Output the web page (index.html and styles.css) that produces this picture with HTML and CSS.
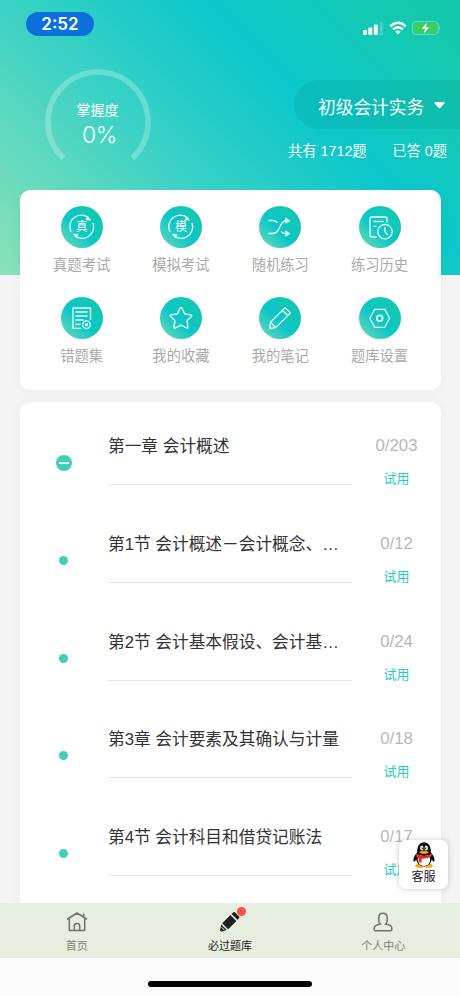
FILE: index.html
```html
<!DOCTYPE html>
<html lang="zh-CN">
<head>
<meta charset="utf-8">
<meta name="viewport" content="width=device-width, initial-scale=1">
<title>必过题库</title>
<link rel="stylesheet" href="styles.css">
</head>
<body>
<div class="screen">
  <header class="hero">
    <div class="status">
      <span class="clock">2:52</span>
      <div class="signals">
        <svg width="21" height="14" viewBox="0 0 21 14"><g fill="#fff"><rect x="0" y="9" width="4" height="5" rx="1"/><rect x="5.3" y="6.5" width="4" height="7.5" rx="1"/><rect x="10.8" y="3.5" width="4" height="10.5" rx="1"/><rect x="16.5" y="1" width="3.6" height="13" rx="1" opacity=".2"/></g></svg>
        <svg width="18" height="14" viewBox="0 0 18 14" fill="none" stroke="#fff" stroke-width="2.4"><path d="M1.2 5.4Q9-1.9 16.8 5.4M4 8.4Q9 3.9 14 8.4"/><path d="M9 13.4L6.2 10.5Q9 8.4 11.8 10.5Z" fill="#fff" stroke="none"/></svg>
        <svg width="30" height="14" viewBox="0 0 30 14"><rect x=".5" y=".5" width="25.6" height="13" rx="3.5" fill="none" stroke="#6bdccb"/><rect x="2" y="2" width="22.6" height="10" rx="2" fill="#3bcf5b"/><path d="M27.3 4.8q1.6 2.2 0 4.4z" fill="#8be4d6"/><path d="M14.8 1.8L9.6 7.7h3.3l-1 4.7 5.2-6.1h-3.3z" fill="#fff"/></svg>
      </div>
    </div>
    <div class="summary">
      <div class="gauge">
        <svg class="gauge-arc" width="108" height="108" viewBox="0 0 108 108"><path d="M19.6 90.3A50 50 0 1 1 88.4 90.3" fill="none" stroke="#fff" stroke-opacity=".25" stroke-width="5.6"/></svg>
        <span class="gauge-label">掌握度</span>
        <span class="gauge-value">0%</span>
      </div>
      <div class="course">
        <div class="course-picker"><span>初级会计实务</span><svg width="11" height="7" viewBox="0 0 11 7"><path d="M1 0h9q1.2.2.4 1.2L6.3 6q-.8.7-1.6 0L.6 1.2Q-.1.2 1 0z" fill="#fff"/></svg></div>
        <div class="totals"><span>共有 1712题</span><span>已答 0题</span></div>
      </div>
    </div>
  </header>

  <main class="content">
    <section class="card tools">
      <div class="tool"><span class="disc"><svg viewBox="0 0 42 42"><path d="M10 26A11.6 11.6 0 0 1 28 12M32 17A11.6 11.6 0 0 1 14 30"/><path class="solid" d="M26.4 10.3l3.3 4-4.7-.5zM15.6 32l-3.4-4 4.8.5z"/></svg><b>真</b></span><span>真题考试</span></div>
      <div class="tool"><span class="disc"><svg viewBox="0 0 42 42"><path d="M10 26A11.6 11.6 0 0 1 28 12M32 17A11.6 11.6 0 0 1 14 30"/><path class="solid" d="M26.4 10.3l3.3 4-4.7-.5zM15.6 32l-3.4-4 4.8.5z"/></svg><b>模</b></span><span>模拟考试</span></div>
      <div class="tool"><span class="disc"><svg viewBox="0 0 42 42"><path d="M9.5 14.500h4q3.500 0 5 2.300M9.500 27.500h4c9 0 5.500-13 15-13M22 25.300q1.500 2.300 5 2.300h2"/><path class="solid" d="M26.500 11.800l4.500 2.900-4.500 2.800zM26.500 24.700l4.500 2.900-4.500 2.800z"/></svg></span><span>随机练习</span></div>
      <div class="tool"><span class="disc"><svg viewBox="0 0 42 42"><path d="M17.500 31h-5q-1.500 0-1.500-1.500v-17q0-1.500 1.500-1.500h14q1.500 0 1.500 1.500v4M14.500 15.500h10M14.500 20.300h3M26 21v5l3 3"/><circle cx="26" cy="25.700" r="7.200"/></svg></span><span>练习历史</span></div>
      <div class="tool"><span class="disc"><svg viewBox="0 0 42 42"><path d="M20 31.300h-8v-20.300h17.500v12M14.500 15h12M14.500 19h12M14.500 23h8M14.500 27.300h5"/><circle cx="25.500" cy="27.700" r="3.800"/><path d="M24.200 26.400l2.600 2.600M26.800 26.400l-2.600 2.600"/></svg></span><span>错题集</span></div>
      <div class="tool"><span class="disc"><svg viewBox="0 0 42 42"><path d="M21 10.500q.7 0 1 .8l2.700 5.600 6.200.9q1.600.4.500 1.600L27 23.700l1 6.400q0 1.600-1.400.9L21 28.200l-5.600 2.800q-1.400.7-1.400-.9l1-6.400-4.400-4.300q-1.100-1.200.5-1.600l6.200-.9 2.700-5.600q.3-.8 1-.8z"/></svg></span><span>我的收藏</span></div>
      <div class="tool"><span class="disc"><svg viewBox="0 0 42 42"><path d="M10.500 31.500l1-6.200L26 10.700l5.400 5.200L16.600 30.600zM11.500 25.300l5.100 5.300M23.400 13.300l5.400 5.300"/></svg></span><span>我的笔记</span></div>
      <div class="tool"><span class="disc"><svg viewBox="0 0 42 42"><path d="M15.700 12.300h10l5 9-5 9h-10l-5-9z"/><circle cx="20.700" cy="21.300" r="2.900" stroke-width="1.700"/></svg></span><span>题库设置</span></div>
    </section>

    <section class="card chapters">
      <article class="row"><span class="marker parent"></span><h2>第一章 会计概述</h2><div class="meta"><span>0/203</span><a>试用</a></div></article>
      <article class="row"><span class="marker"></span><h2>第1节 会计概述－会计概念、…</h2><div class="meta"><span>0/12</span><a>试用</a></div></article>
      <article class="row"><span class="marker"></span><h2>第2节 会计基本假设、会计基…</h2><div class="meta"><span>0/24</span><a>试用</a></div></article>
      <article class="row"><span class="marker"></span><h2>第3章 会计要素及其确认与计量</h2><div class="meta"><span>0/18</span><a>试用</a></div></article>
      <article class="row"><span class="marker"></span><h2>第4节 会计科目和借贷记账法</h2><div class="meta"><span>0/17</span><a>试用</a></div></article>
    </section>
  </main>

  <nav class="tabs">
    <div class="tab"><svg width="22" height="22" viewBox="0 0 22 22" fill="none" stroke="#6d756b" stroke-width="1.500" stroke-linejoin="round" stroke-linecap="round"><path d="M1.500 8L11 2l9.500 6M3.300 7.500v12h15.400v-12M17.700 5.500V3M8.300 19.300v-4.300q0-2.500 2.700-2.500t2.700 2.500v4.300"/></svg><span>首页</span></div>
    <div class="tab active"><svg width="22" height="22" viewBox="0 0 22 22" fill="#1d211b"><path d="M3.200 12.200L11.400 4l6 6-8.200 8.200zM12.600 2.900L14.300 1.300q.8-.8 1.600 0l4.200 4.200q.8.800 0 1.600L18.500 8.800zM2.300 13.500l5.400 5.400-4.600 1.500q-2 .5-2-1.400z"/><path d="M2.600 16.200l2.800 2.900" stroke="#e7eedf" stroke-width="1"/></svg><span>必过题库</span><i class="dot"></i></div>
    <div class="tab"><svg width="22" height="22" viewBox="0 0 22 22" fill="none" stroke="#6d756b" stroke-width="1.500"><path d="M8.200 13C6.300 11.500 6.800 9 6.800 6.500q0-4.300 4.200-4.300t4.200 4.300c0 2.500.5 5-1.400 6.500 2.500.5 6 .7 6 4v1.500q0 1.200-1.200 1.200H3.400q-1.200 0-1.200-1.200V17c0-3.300 3.500-3.500 6-4z"/></svg><span>个人中心</span></div>
  </nav>
  <div class="home-area"><span class="home-bar"></span></div>

  <aside class="support">
    <svg width="22" height="26" viewBox="0 0 24 26" preserveAspectRatio="none">
      <path d="M5 10C1 14 0 17 .7 19.500c.7 1 2-.5 2.800-2h17c.8 1.500 2.100 3 2.800 2C24 17 23 14 19 10z" fill="#111"/>
      <ellipse cx="7.500" cy="23.800" rx="5" ry="2" fill="#f6a21b"/><ellipse cx="16.500" cy="23.800" rx="5" ry="2" fill="#f6a21b"/>
      <ellipse cx="12" cy="16.500" rx="8.600" ry="7.700" fill="#111"/><ellipse cx="12" cy="17.800" rx="6.700" ry="6.200" fill="#fff"/>
      <path d="M4.500 10.500C3.500-3.300 20.500-3.300 19.500 10.500 18 15 6 15 4.500 10.500z" fill="#111"/>
      <path d="M4 11.500q8 4.700 16 0l.8 2.500q-5.500 3.200-11.500 2.700v3.800H6l.3-4.300-3.100-2z" fill="#e7282e"/>
      <ellipse cx="9.600" cy="6" rx="1.800" ry="2.500" fill="#fff"/><ellipse cx="14.400" cy="6" rx="1.800" ry="2.500" fill="#fff"/><circle cx="10.200" cy="6.200" r=".8"/><circle cx="13.800" cy="6.200" r=".8"/>
      <ellipse cx="12" cy="10.300" rx="4.700" ry="1.500" fill="#f6a21b"/>
    </svg>
    <span>客服</span>
  </aside>
</div>
</body>
</html>
```
FILE: styles.css
```css
* { box-sizing: border-box; }
body { margin: 0; background: #f4f4f4; font-family: "Liberation Sans", "Noto Sans CJK SC", sans-serif; }
.screen { position: relative; display: flex; flex-direction: column; width: 460px; height: 996px; overflow: hidden; }

.hero { flex: none; height: 275px; color: #fff; background: linear-gradient(45deg, #8ce1b6 0%, #3dd2c5 37%, #0bc7cb 65%, #14c9ab 92%, #14c9a8 100%); }
.status { display: flex; justify-content: space-between; height: 68px; padding: 12px 18px 0 26px; }
.clock { width: 68px; height: 24px; border-radius: 12px; background: #0b70da; font: 600 17px/24px Inter, sans-serif; text-align: center; }
.signals { display: flex; gap: 5px; padding-top: 9px; }

.summary { display: flex; justify-content: space-between; padding-left: 44px; }
.gauge { position: relative; display: flex; flex-direction: column; align-items: center; width: 108px; padding-top: 32px; }
.gauge-arc { position: absolute; left: 0; top: 0; }
.gauge-label { margin-left: -1px; font-size: 14.200px; line-height: 21px; }
.gauge-value { padding-left: 3px; font: 300 23px/28px Inter, sans-serif; letter-spacing: -.5px; }
.course { padding-top: 12px; }
.course-picker { display: flex; align-items: center; gap: 10px; width: 166px; height: 49px; padding: 2px 0 0 24px; border-radius: 25px 0 0 25px; background: rgba(0, 130, 110, .14); font-size: 17.700px; white-space: nowrap; }
.totals { display: flex; justify-content: space-between; width: 159px; margin-left: -6px; padding-top: 11px; font-size: 14.300px; line-height: 22px; white-space: nowrap; }

.content { flex: none; display: flex; flex-direction: column; gap: 12px; height: 713px; margin-top: -85px; padding: 0 19px 0 20px; overflow: hidden; }
.card { flex: none; border-radius: 10px; background: #fff; box-shadow: 0 0 14px rgba(0, 0, 0, .035); }
.tools { display: grid; grid-template-columns: repeat(4, 99.300px); grid-auto-rows: 91px; height: 200px; padding: 16px 12px 0; }
.chapters { height: 520px; }
.tool { display: flex; flex-direction: column; align-items: center; gap: 6px; color: #aaa; font-size: 14.300px; line-height: 22px; }
.disc { position: relative; display: grid; place-items: center; width: 42px; height: 42px; border-radius: 50%; color: #fff; background: linear-gradient(45deg, #66d8b8 5%, #0dc6c7 45%, #15c9a9 100%); }
.disc svg { grid-area: 1 / 1; width: 42px; height: 42px; fill: none; stroke: #e9fffb; stroke-width: 1.300; stroke-linejoin: round; }
.disc .solid { fill: #e9fffb; stroke-width: .5; }
.disc b { grid-area: 1 / 1; font-size: 12px; font-weight: 400; line-height: 16px; }

.row { display: grid; grid-template-columns: 88px 244px 1fr; height: 97.750px; }
.marker { justify-self: center; width: 9px; height: 9px; margin: 56px 1px 0 0; border-radius: 50%; background: #3fd0b7; }
.marker.parent { display: grid; place-items: center; width: 16px; height: 16px; margin-top: 53px; }
.parent::before { content: ""; width: 10px; height: 2px; background: #e8fffa; }
.row h2 { height: 83px; margin: 0; padding-top: 32px; border-bottom: 1px solid #e5e5e5; color: #333; font-size: 16.700px; font-weight: 400; line-height: 25px; white-space: nowrap; }
.meta { display: flex; flex-direction: column; align-items: center; padding-top: 34px; color: #b8b8b8; font-size: 16.800px; line-height: 20px; }
.meta a { padding-top: 13px; color: #28cdbb; font-size: 13px; }

.tabs { display: grid; grid-template-columns: repeat(3, 1fr); flex: none; height: 55px; background: #e7eedf; }
.tab { position: relative; display: flex; flex-direction: column; align-items: center; padding-top: 8px; gap: 5px; color: #7d8479; font-size: 11px; line-height: 17px; }
.tab.active { color: #1d211b; }
.dot { position: absolute; left: 84px; top: 4px; width: 9px; height: 9px; border-radius: 50%; background: #fa5051; }
.home-area { display: flex; flex: 1; justify-content: center; padding-top: 23px; background: #fbfbfb; }
.home-bar { width: 164px; height: 6px; border-radius: 3px; background: #000; }
.support { position: absolute; left: 399px; top: 840px; display: flex; flex-direction: column; align-items: center; width: 49px; height: 49px; padding-top: 2px; border-radius: 7px; background: #fff; box-shadow: 0 0 6px rgba(0, 0, 0, .2); color: #222; font-size: 12px; line-height: 19px; }
```
